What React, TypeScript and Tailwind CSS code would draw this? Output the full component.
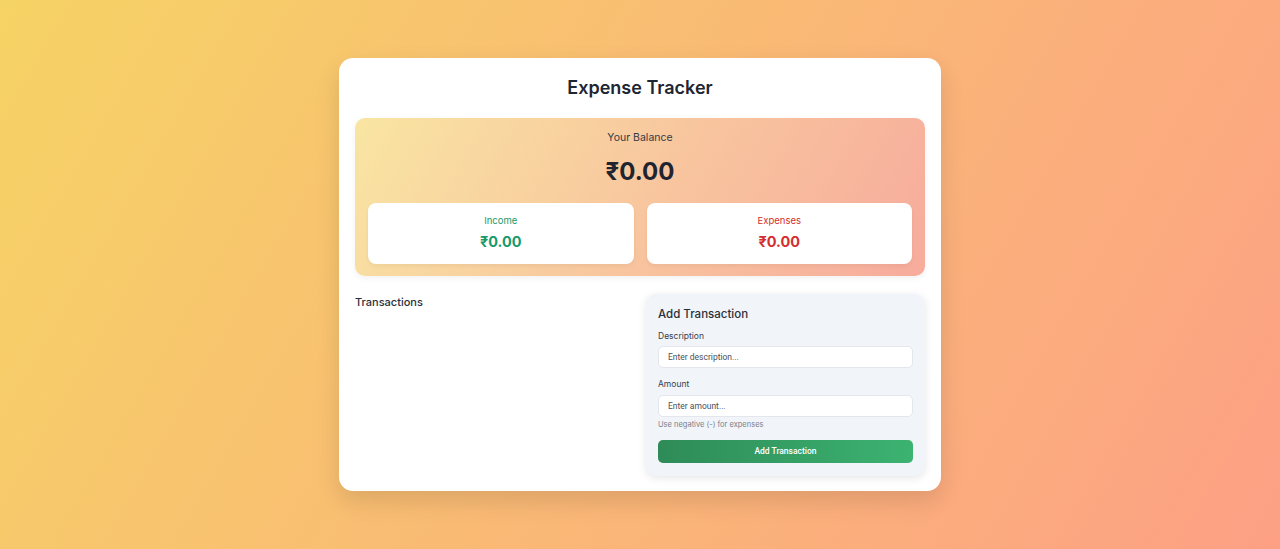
import React from "react";

export default function App() {
  return (
    <div
      className="min-h-screen w-full flex items-center justify-center bg-[linear-gradient(120deg,#f6d365_0%,#fda085_100%)]"
      style={{ fontFamily: "Inter, 'Noto Sans', 'DejaVu Sans', sans-serif" }}
    >
      <div className="w-[602px] bg-white rounded-[14px] shadow-[0_10px_25px_rgba(0,0,0,0.12)] px-[16px] pt-[16px] pb-[15px]">
        <h1 className="text-center text-[18px] leading-[28px] font-semibold text-[#1e2533] mb-[16px]">
          Expense Tracker
        </h1>

        <div className="rounded-[10px] bg-[linear-gradient(120deg,#f9e5a2_0%,#f8c49e_55%,#f7ab9c_100%)] px-[13px] pt-[12px] pb-[12px] shadow-[0_2px_6px_rgba(0,0,0,0.06)]">
          <div className="text-center text-[10.5px] leading-[16px] text-[#333a45]">Your Balance</div>
          <div className="text-center text-[24px] leading-[32px] font-bold text-[#1f2430] mt-[10px]">₹0.00</div>
          <div className="grid grid-cols-2 gap-[13px] mt-[15px]">
            <div className="bg-white rounded-[8px] h-[61px] flex flex-col items-center pt-[11px] shadow-[0_2px_4px_rgba(0,0,0,0.05)]">
              <div className="text-[9.5px] leading-[14px] text-[#1a9a6a]">Income</div>
              <div className="text-[14.5px] leading-[20px] font-bold text-[#1a9a6a] mt-[4px]">₹0.00</div>
            </div>
            <div className="bg-white rounded-[8px] h-[61px] flex flex-col items-center pt-[11px] shadow-[0_2px_4px_rgba(0,0,0,0.05)]">
              <div className="text-[9.5px] leading-[14px] text-[#d32f2f]">Expenses</div>
              <div className="text-[14.5px] leading-[20px] font-bold text-[#d32f2f] mt-[4px]">₹0.00</div>
            </div>
          </div>
        </div>

        <div className="grid grid-cols-2 gap-[12px] mt-[18px]">
          <div>
            <h2 className="text-[11px] leading-[16px] font-medium text-[#2a303b]">Transactions</h2>
          </div>
          <div className="bg-[#f1f4f8] rounded-[10px] shadow-[0_2px_8px_rgba(0,0,0,0.1)] px-[12px] pt-[12px] pb-[13px]">
            <h3 className="text-[11.5px] leading-[16px] font-medium text-[#2a303b]">Add Transaction</h3>
            <label className="block text-[8.5px] leading-[12px] text-[#3a414d] mt-[8px]">Description</label>
            <input
              className="mt-[4px] block w-full h-[22px] bg-white rounded-[5px] border border-[#e3e7ed] px-[9px] text-[8.5px] outline-none placeholder:text-[#4a505a]"
              style={{ fontFamily: "Roboto, 'Liberation Sans', sans-serif" }}
              placeholder="Enter description..."
            />
            <label className="block text-[8.5px] leading-[12px] text-[#3a414d] mt-[10px]">Amount</label>
            <input
              className="mt-[5px] block w-full h-[22px] bg-white rounded-[5px] border border-[#e3e7ed] px-[9px] text-[8.5px] outline-none placeholder:text-[#4a505a]"
              style={{ fontFamily: "Roboto, 'Liberation Sans', sans-serif" }}
              placeholder="Enter amount..."
            />
            <div className="text-[7.5px] leading-[10px] text-[#7a808a] mt-[3px]">Use negative (-) for expenses</div>
            <button
              className="mt-[10px] block w-full h-[23px] rounded-[5px] bg-[linear-gradient(90deg,#2e8b57_0%,#3cb371_100%)] text-white text-[8.5px] font-medium"
              style={{ fontFamily: "Roboto, 'Liberation Sans', sans-serif" }}
            >
              Add Transaction
            </button>
          </div>
        </div>
      </div>
    </div>
  );
}
